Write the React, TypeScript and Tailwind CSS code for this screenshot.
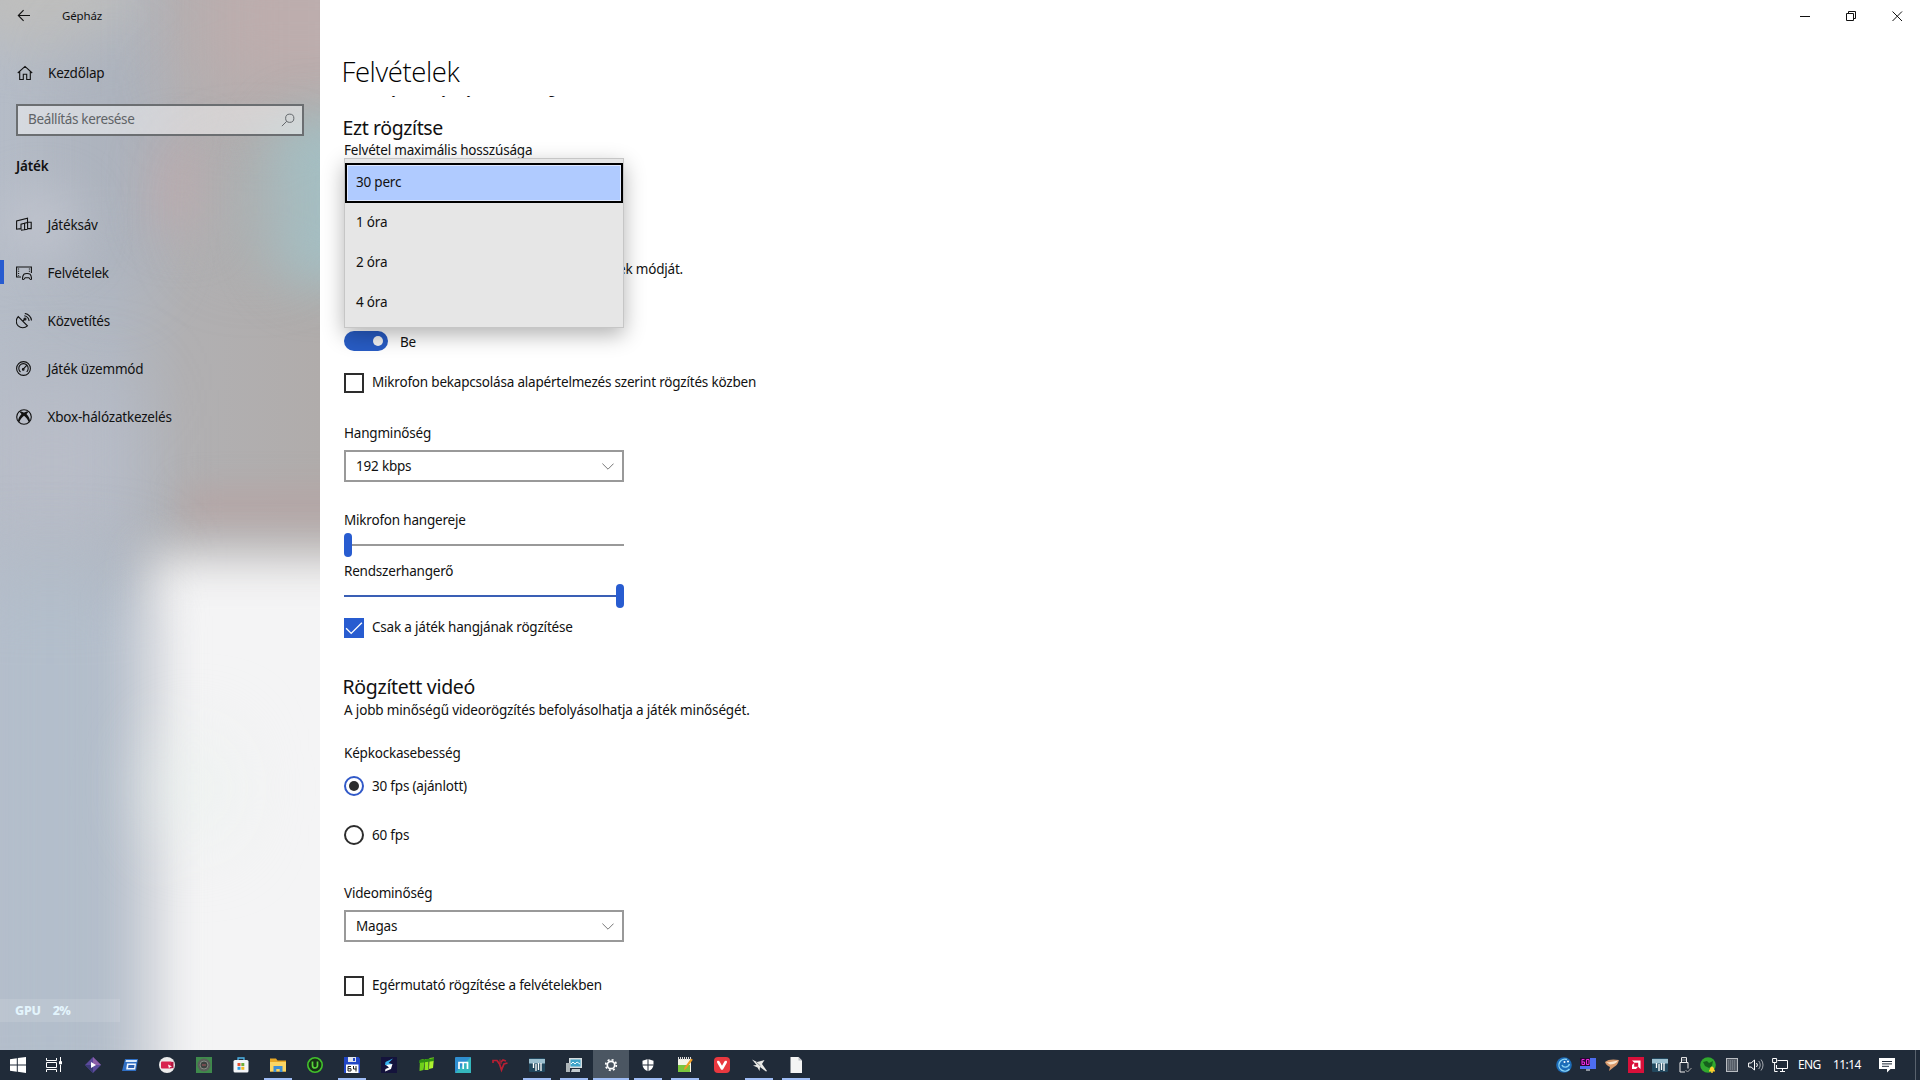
import React, { ReactNode } from 'react';

function Icon({ children, size = 16, className = '' }: { children: ReactNode; size?: number; className?: string }) {
  return (
    <svg width={size} height={size} viewBox="0 0 16 16" fill="none" stroke="currentColor" strokeWidth="1.1" className={`shrink-0 ${className}`}>
      {children}
    </svg>
  );
}

/* ---------- Sidebar ---------- */

function Backdrop() {
  return (
    <div className="absolute inset-0 overflow-hidden bg-[linear-gradient(to_right,#b5bcc7_0%,#b1b7c1_35%,#b1b0b2_58%,#b0acab_100%)]">
      <div className="absolute -left-10 -top-16 h-28 w-44 rounded-full bg-[#bebebd] blur-xl" />
      <div className="absolute left-20 top-8 h-64 w-16 rounded-full bg-[#a9afba] opacity-80 blur-2xl" />
      <div className="absolute left-0 top-48 h-16 w-20 rounded-full bg-[#bfc3cd] blur-xl" />
      <div className="absolute left-[195px] -top-16 h-40 w-52 bg-[#bdadad] blur-2xl" />
      <div className="absolute left-[158px] top-[140px] h-24 w-12 rounded-full bg-[#bcabae] blur-xl" />
      <div className="absolute left-[265px] top-28 h-44 w-28 rounded-full bg-[#a4bfc3] blur-xl" />
      <div className="absolute left-[215px] top-[170px] h-20 w-20 rounded-full bg-[#abb2b4] blur-2xl" />
      <div className="absolute -left-5 top-[390px] h-36 w-36 bg-[#b9bdc8] blur-2xl" />
      <div className="absolute left-[185px] top-[490px] h-8 w-48 bg-[#b5a5a5] blur-lg" />
      <div className="absolute -left-10 top-[570px] h-[560px] w-[180px] bg-[#b3becb] blur-2xl" />
      <div className="absolute left-[150px] top-[556px] h-[620px] w-72 bg-[#f4f4f5] blur-xl" />
      <div className="absolute left-[128px] top-[600px] h-[520px] w-8 bg-[#d7dce6] opacity-50 blur-xl" />
      <div className="absolute left-[165px] top-[740px] h-24 w-14 rounded-full bg-[#e9f1ed] blur-2xl" />
    </div>
  );
}

const navItems = [
  {
    label: 'Játéksáv',
    icon: (
      <Icon>
        <path d="M11.500 5V1.100L.6 4v8.200l4-.6M5 12.600V7.200l3.600-1v6.900M5 13.200l6.600-1M8.600 12.600V6.200l3-.8v6.800M11.600 5.200h3.600v6.400h-3.600" />
      </Icon>
    ),
  },
  {
    label: 'Felvételek',
    active: true,
    icon: (
      <Icon>
        <path d="M5 12H.6V2h14.800v6" />
        <path d="M2.600 3.500v7.200M13.400 3.500V7" strokeDasharray="1 1.200" />
        <path d="M8 9.200c1-.9 5-.9 6 0 .9 1 1.500 3 1.500 4.500 0 1-1 1-1.600.3l-1-1.300H9.200l-1 1.300c-.6.7-1.700.7-1.700-.3 0-1.500.6-3.500 1.500-4.500z" />
      </Icon>
    ),
  },
  {
    label: 'Közvetítés',
    icon: (
      <Icon>
        <path d="M2.200 3.600a6.200 6.200 0 1 0 9.200 9.200zM6.800 8.200l2-2M8.300 2.800a6 6 0 0 1 4.800 5.200M8.800.5a7.500 7.500 0 0 1 6.700 7" />
        <circle cx="9" cy="6" r="1" />
      </Icon>
    ),
  },
  {
    label: 'Játék üzemmód',
    icon: (
      <Icon>
        <circle cx="7.500" cy="7.500" r="6.900" />
        <path d="M4.500 11a4.700 4.700 0 1 1 6.200-.2M7.200 8.200l3.300-3.600" />
        <circle cx="7.200" cy="8.400" r=".8" />
      </Icon>
    ),
  },
  {
    label: 'Xbox-hálózatkezelés',
    icon: (
      <Icon>
        <circle cx="8" cy="8" r="7.300" />
        <path d="M3.200 2.600C5 2 7 3 8 3.700 9 3 11 2 12.800 2.600L10.500 5c2 2.300 3.500 5 3.500 7l-1.400 1C12 10.500 9.800 8 8 6.700 6.200 8 4 10.500 3.400 13L2 12c0-2 1.500-4.700 3.500-7z" fill="currentColor" stroke="none" />
      </Icon>
    ),
  },
];

function Sidebar() {
  return (
    <aside className="relative h-full w-[320px] shrink-0 overflow-hidden">
      <Backdrop />
      <div className="relative flex h-full flex-col">
        <div className="flex h-8 items-center pl-4">
          <Icon>
            <path d="M14 7.500H2.500M7.600 2.200L2.300 7.500l5.300 5.300" />
          </Icon>
          <span className="ml-[30px] text-[11.500px] leading-4 tracking-[-0.150px]">Gépház</span>
        </div>
        <div className="mt-[31px] flex h-5 items-center pl-[17px]">
          <Icon>
            <path d="M.8 8L8 1.400 15.200 8M2.700 6.500v8h3.600V9.300h3.400v5.200h3.600v-8" />
          </Icon>
          <span className="ml-[15px]">Kezdőlap</span>
        </div>
        <div className="ml-4 mt-[21px] flex h-8 w-72 items-center justify-between border-2 border-[#6b6e71] bg-white/45 pl-[10px] pr-[7px]">
          <span className="-mt-[3px] tracking-[-0.35px] text-[#5f6367]">Beállítás keresése</span>
          <Icon size={14} className="text-[#5f6367]">
            <circle cx="10" cy="6" r="4.700" />
            <path d="M6.600 9.400L1 15" />
          </Icon>
        </div>
        <div className="mt-5 h-5 pl-4 font-semibold">Játék</div>
        <nav className="mt-[25px] flex flex-col">
          {navItems.map((n) => (
            <div key={n.label} className="relative flex h-12 items-center pl-4">
              {n.active && <div className="absolute left-0 top-[11px] h-6 w-1 bg-[#285cd0]" />}
              {n.icon}
              <span className="ml-[15.500px]">{n.label}</span>
            </div>
          ))}
        </nav>
        <div className="mb-[28px] mt-auto flex h-[23px] w-[120px] items-center gap-[12px] bg-white/10 pl-[15px] text-[12.500px] font-extrabold text-[#e3f4fc]">
          <span>GPU</span>
          <span className="tracking-[-0.8px]">2%</span>
        </div>
      </div>
    </aside>
  );
}

/* ---------- Form controls ---------- */

function CheckBox({ checked, label }: { checked?: boolean; label: string }) {
  return (
    <div className="flex h-5 items-center">
      {checked ? (
        <div className="flex h-5 w-5 items-center justify-center bg-[#285cd0] text-white">
          <Icon size={18}>
            <path d="M1 8.300l4.500 4.500L15 3.300" strokeWidth="1.200" />
          </Icon>
        </div>
      ) : (
        <div className="h-5 w-5 border-2 border-[#2d2d2d] bg-white" />
      )}
      <span className="-mt-0.5 ml-2">{label}</span>
    </div>
  );
}

function Radio({ checked, label }: { checked?: boolean; label: string }) {
  return (
    <div className="flex h-5 items-center">
      {checked ? (
        <div className="flex h-5 w-5 items-center justify-center rounded-full border-2 border-[#3159c8]">
          <div className="h-[10px] w-[10px] rounded-full bg-[#2d2d2d]" />
        </div>
      ) : (
        <div className="h-5 w-5 rounded-full border-2 border-[#2d2d2d]" />
      )}
      <span className="ml-2">{label}</span>
    </div>
  );
}

function Select({ value }: { value: string }) {
  return (
    <div className="mt-[7px] flex h-8 w-[280px] items-center justify-between border-2 border-[#999] pl-[10px] pr-2">
      <span>{value}</span>
      <svg width="12" height="7" viewBox="0 0 12 7" fill="none" stroke="#777">
        <path d="M.4.6L6 6.200 11.600.6" />
      </svg>
    </div>
  );
}

function Slider({ full }: { full?: boolean }) {
  return (
    <div className={`mt-[3px] flex h-6 w-[280px] items-center ${full ? 'flex-row-reverse' : ''}`}>
      <div className="h-6 w-2 rounded-full bg-[#285cd0]" />
      <div className={`h-0.5 flex-1 ${full ? 'bg-[#3a5fb5]' : 'bg-[#999]'}`} />
    </div>
  );
}

function LengthMenu() {
  return (
    <div className="relative h-0">
      <div className="absolute -top-[2px] left-0 z-10 flex h-[170px] w-[280px] flex-col border border-[#c6c6c6] bg-[#e6e6e6] pt-1 shadow-[0_7px_20px_rgba(0,0,0,0.3)]">
        <div className="flex h-10 items-center border-2 border-black">
          <div className="flex h-full w-full items-center border border-[#dfe8ff] bg-[#b0cbff] pb-[2px] pl-[8px]">30 perc</div>
        </div>
        {['1 óra', '2 óra', '4 óra'].map((o) => (
          <div key={o} className="flex h-10 items-center pb-[2px] pl-[11px]">
            {o}
          </div>
        ))}
      </div>
    </div>
  );
}

function Content() {
  return (
    <main className="flex flex-1 flex-col bg-white pl-6">
      <div className="flex h-[52px] items-start justify-end pt-[7px]">
        <div className="flex h-4 items-center gap-[30px] pr-[15px]">
          <svg width="16" height="16" fill="none" stroke="#111"><path d="M3 9.500h10" /></svg>
          <svg width="16" height="16" fill="none" stroke="#111"><path d="M3.500 6.500h7v7h-7zM5.500 6.500v-2h7v7h-2" /></svg>
          <svg width="16" height="16" fill="none" stroke="#111"><path d="M3.500 4.500l9.500 9.500M13 4.500L3.500 14" /></svg>
        </div>
      </div>
      <h1 className="-ml-[2.500px] h-10 font-['Open_Sans'] text-[27.500px] font-light leading-10 tracking-[-0.4px] text-black">Felvételek</h1>
      <div className="mt-1 flex h-[3px] w-[300px] items-end overflow-hidden pl-[49px]">
        <span className="mb-px w-[50px]">j</span>
        <span className="mb-px w-[25px]">j</span>
        <span className="mb-px w-[80px]">j</span>
        <span className="mb-px">g</span>
      </div>
      <h2 className="-ml-[1.500px] mt-[15px] h-7 text-[19.500px] leading-7 tracking-[-0.4px]">Ezt rögzítse</h2>
      <div className="-mt-0.5">Felvétel maximális hosszúsága</div>
      <LengthMenu />
      <div className="mt-[99px] w-[339px] text-right">felvételek módját.</div>
      <div className="mt-[52px] flex h-5 items-center">
        <div className="flex h-5 w-11 items-center justify-end rounded-full bg-[#285cc4] pr-[5px]">
          <div className="h-[10px] w-[10px] rounded-full bg-[#f2f2f2]" />
        </div>
        <span className="ml-3 mt-0.5">Be</span>
      </div>
      <div className="mt-[22px]"><CheckBox label="Mikrofon bekapcsolása alapértelmezés szerint rögzítés közben" /></div>
      <div className="mt-[30px]">Hangminőség</div>
      <Select value="192 kbps" />
      <div className="mt-[28px]">Mikrofon hangereje</div>
      <Slider />
      <div className="mt-1">Rendszerhangerő</div>
      <Slider full />
      <div className="mt-[10px]"><CheckBox checked label="Csak a játék hangjának rögzítése" /></div>
      <h2 className="-ml-[1.500px] mt-[35px] h-7 text-[19.500px] leading-7 tracking-[-0.3px]">Rögzített videó</h2>
      <div className="-mt-px tracking-[-0.16px]">A jobb minőségű videorögzítés befolyásolhatja a játék minőségét.</div>
      <div className="mt-[23px]">Képkockasebesség</div>
      <div className="mt-[13px]"><Radio checked label="30 fps (ajánlott)" /></div>
      <div className="mt-[29px]"><Radio label="60 fps" /></div>
      <div className="mt-[38px]">Videominőség</div>
      <Select value="Magas" />
      <div className="mt-[34px]"><CheckBox label="Egérmutató rögzítése a felvételekben" /></div>
    </main>
  );
}

/* ---------- Taskbar ---------- */

const apps: { id: string; open?: boolean; active?: boolean; icon: ReactNode }[] = [
  { id: 'media', icon: <><path d="M8 0l8 8-8 8-8-8z" fill="#5b4a9c" /><path d="M8 0l8 8H8z" fill="#8d5fa8" /><path d="M0 8h8v8z" fill="#3c3a78" /><path d="M6 5l5 3-5 3z" fill="#fff" /></> },
  { id: 'run', icon: <><path d="M3 2h13l-2 12H0z" fill="#2f6fc4" /><path d="M4 3h11l-.4 2H3.500z" fill="#d9e9fa" /><path d="M5 6.500h9l-.8 6H4.200z" fill="#f1f6fc" /><path d="M6.500 8h6l-.4 3H6z" fill="#2a5fb0" /></> },
  { id: 'rec', icon: <><circle cx="8" cy="8" r="8" fill="#ececec" /><rect x="2" y="4.500" width="11" height="7" rx="1" fill="#d8234f" /><path d="M12 5.500l2.500-1v7l-2.500-1z" fill="#b01740" /><path d="M9 7.500l4 2-2 .6-1 1.500z" fill="#fff" /></> },
  { id: 'cam', icon: <><rect width="16" height="16" fill="#3f8a4c" /><circle cx="8" cy="8" r="6.500" fill="#5b5f5b" /><circle cx="8" cy="8" r="4" fill="#3c4340" stroke="#858a84" /><path d="M6 8h4" stroke="#a8545c" /></> },
  { id: 'store', icon: <><path d="M5 4V1h6v3" stroke="#4db5e8" fill="none" strokeWidth="1.300" /><rect x=".5" y="3" width="15" height="12.500" rx="1.500" fill="#f4f6f8" /><path d="M4.500 6h3v3h-3z" fill="#e8512e" /><path d="M8.300 6h3v3h-3z" fill="#6fae3c" /><path d="M4.500 9.800h3v3h-3z" fill="#2a9be0" /><path d="M8.300 9.800h3v3h-3z" fill="#f5b921" /></> },
  { id: 'explorer', open: true, icon: <><path d="M0 1.500h6l1.500 2H16v11H0z" fill="#e9a825" /><path d="M0 5h16v9.500H0z" fill="#fcd663" /><path d="M3.500 15V9h9v6h-2.800v-3H6.300v3z" fill="#3f8fd4" /></> },
  { id: 'ugreen', icon: <><circle cx="8" cy="8" r="7.200" fill="#173016" stroke="#42c22c" strokeWidth="1.600" /><path d="M5.500 4.500v4a2.500 2.500 0 0 0 5 0v-4" stroke="#58d53b" strokeWidth="1.700" fill="none" /></> },
  { id: 'commander', open: true, icon: <><path d="M0 0h14.500L16 1.500V16H0z" fill="#2146c6" /><path d="M4 0h8v5H4z" fill="#dfe3ec" /><path d="M9 1h2v3H9z" fill="#2146c6" /><path d="M2 7.500h12.500V16H2z" fill="#fff" /><path d="M7 9.500H4v4.500h3v-2.300H4M9.500 9v3h3M12 9v5.500" stroke="#222" fill="none" /></> },
  { id: 's', icon: <><rect width="16" height="16" fill="#14133c" /><path d="M12 1.500L4.500 5 4 8l6 1 1-2-3.500-1z" fill="#37b5f0" /><path d="M11.500 7L10 12l-6 2.500.5-2.500L8 10.500 5 8z" fill="#fff" /></> },
  { id: 'green', icon: <><path d="M2 3l3.500-1 1 4-1 7-4 1z" fill="#6fd01c" /><path d="M7 2h3.500v11h-4z" fill="#8ee81f" /><path d="M11.500 1L16 .5 15 11l-4 1z" fill="#aef32f" /><path d="M1.500 3L16 1v3L1 6z" fill="#2f8f12" /></> },
  { id: 'm', icon: <><rect width="16" height="16" rx="1" fill="#2f8ed0" /><path d="M0 16L16 0v16z" fill="#35b7bd" /><path d="M4 12V5.500h8.500V12M8.200 6v6" stroke="#fff" strokeWidth="1.700" fill="none" /></> },
  { id: 'v', icon: <><path d="M1 6V3.500h4L7.500 7l2 6 2.500-6 3.500-1M9 5l2-2 3 1" stroke="#b81f33" strokeWidth="1.700" fill="none" /><path d="M6 6h4M8 2.500v3" stroke="#b81f33" /></> },
  { id: 'mixer', open: true, icon: <><rect y="1" width="16" height="14" rx="1" fill="#22485e" /><path d="M0 2h16v4.500H0z" fill="#9cc0d0" /><path d="M4.500 6v5M7 7v7M9.500 6v7M12 6v8" stroke="#fff" strokeWidth="1.300" /></> },
  { id: 'monitor', open: true, icon: <><path d="M3 1h13v10H3z" fill="#d6dde0" /><path d="M4.500 2.500h10v7h-10z" fill="#3fa4ca" /><path d="M5 7l2-2 2 2 2-2 3 2" stroke="#e9fbff" fill="none" /><path d="M0 6h4v9H0z" fill="#aeb6b9" /><path d="M6 12h8v3H5z" fill="#c3cbce" /></> },
  { id: 'settings', open: true, active: true, icon: <><circle cx="8" cy="8" r="3.700" stroke="#fff" strokeWidth="1.700" fill="none" /><circle cx="8" cy="8" r="5.300" stroke="#fff" strokeWidth="1.700" strokeDasharray="2 2.163" fill="none" /></> },
  { id: 'shield', open: true, icon: <><path d="M8 2l5.500 1.800v3.600c0 3.300-2.300 5.600-5.500 6.900-3.200-1.300-5.500-3.600-5.500-6.900V3.800z" fill="#fff" /><path d="M8 2v13M2.200 8h11.600" stroke="#222d3b" /></> },
  { id: 'notes', open: true, icon: <><path d="M1 2h13v13H1z" fill="#f5f5e9" /><path d="M1 8h12v7H1z" fill="#7ac63d" /><path d="M1 1.500h13" stroke="#ddd" strokeDasharray="1 1" strokeWidth="3" /><path d="M14 1.500l1.800 1.300L9 12l-2 1 .3-2.300z" fill="#ed9b24" /></> },
  { id: 'vivaldi', icon: <><rect width="16" height="16" rx="4" fill="#e9383f" /><path d="M4.300 5L8 11.500 11.700 5" stroke="#fff" strokeWidth="2.600" strokeLinecap="round" strokeLinejoin="round" fill="none" /></> },
  { id: 'plane', open: true, icon: <><path d="M1 2.500l5 2.500 7.500-2L11 7l5 7-1 .5-6-4.500L8.500 14l-2-3.500L2 8.500 5.500 8z" fill="#e9e9e6" /><path d="M5 5l4.500 4" stroke="#8b8f92" /></> },
  { id: 'doc', open: true, icon: <><path d="M2.500 0h8l3.500 3.500V16H2.500z" fill="#f4f4f4" /><path d="M10.500 0v3.500H14z" fill="#b9bdc2" /></> },
];

const tray: { id: string; icon: ReactNode }[] = [
  { id: 'c', icon: <><circle cx="8" cy="8" r="7.800" fill="#1c6cb8" /><path d="M11 2.500a6 6 0 1 0 2.500 9.500M6 8c1 3 6 3 7.500-1" stroke="#8bd4f5" strokeWidth="1.400" fill="none" /><circle cx="8.500" cy="5" r="1" fill="#fff" /><circle cx="12" cy="4.500" r="1" fill="#fff" /></> },
  { id: '60', icon: <><rect y="1" width="16" height="11" fill="#4d6df0" /><rect y="1" width="10" height="8" fill="#2a0636" /><path d="M4.500 2.500H2v5h2.500V5H2M6.500 2.500H9v5H6.500z" stroke="#ee2be0" fill="none" /><path d="M6 12h4v2H6z" fill="#8d949d" /></> },
  { id: 'wing', icon: <><path d="M1 5c3-3 9-3 14-2-1 4-3 6-5 7l-5 4 1-4C4 9 2 8 1 5z" fill="#d99a6c" /><path d="M2 5c4 1 8-1 12-1.500-2 3-5 4-8 4z" fill="#fae6cf" /></> },
  { id: 'amd', icon: <><rect width="16" height="16" fill="#d9103a" /><path d="M4 3.500h8.500V12l-2.300-2.300V5.800H6.300z" fill="#fff" /><path d="M4 8l2.200-2v3.800H10L8 12H4z" fill="#fff" /></> },
  { id: 'mix', icon: <><rect y="1" width="16" height="14" rx="1" fill="#22485e" /><path d="M0 2h16v4.500H0z" fill="#9cc0d0" /><path d="M4.500 6v5M7 7v7M9.500 6v7M12 6v8" stroke="#fff" strokeWidth="1.300" /></> },
  { id: 'usb', icon: <><path d="M5.500 5V.6h5V5M4 5.500h8v6M4 5.500V15h5M7 2.500v1M9 2.500v1" stroke="#eee" fill="none" /><path d="M9.500 13l2 2 4-4" stroke="#aaa" fill="none" /></> },
  { id: 'globe', icon: <><circle cx="8" cy="8" r="7.800" fill="#31a82e" /><path d="M3 5l4-1 2 2 4-2-1 5-3 2-4-2z" fill="#14611c" /><path d="M9 13.500c1 0 .8-4 3-4s2 4 3 4v1H9z" fill="#ffd12e" /><circle cx="12" cy="15" r="1" fill="#ffd12e" /></> },
  { id: 'grid', icon: <><rect x="2.500" y="1.500" width="11" height="13" fill="#555c66" stroke="#b9bdc2" /><path d="M4 4h8M4 6h8M4 8h8M4 10h8M4 12h8" stroke="#8d949c" strokeDasharray="1 1" /></> },
  { id: 'volume', icon: <><path d="M.6 6v4h2.500L6.500 13V3L3.100 6z" stroke="#fff" fill="none" /><path d="M8.500 6a3 3 0 0 1 0 4" stroke="#fff" fill="none" /><path d="M10.700 4a6 6 0 0 1 0 8M13 2.500a8.500 8.500 0 0 1 0 11" stroke="#a4a9af" fill="none" /></> },
  { id: 'network', icon: <><path d="M5.500 3.500h10v8h-11V8M8 14.500h5M10.500 11.500v3" stroke="#fff" fill="none" /><path d="M.6 1.500h4v4h-4zM2.600 5.500v9h3" stroke="#fff" fill="none" /></> },
];

function Taskbar() {
  return (
    <footer className="flex h-[30px] items-center bg-[#202b39] text-white">
      <div className="flex h-full w-9 items-center justify-center">
        <svg width="16" height="16" fill="#fff"><path d="M0 2.200L6.800 1.200v6.300H0zM7.800 1.100L16 0v7.500H7.800zM0 8.500h6.800v6.300L0 13.800zM7.800 8.500H16V16l-8.200-1.200z" /></svg>
      </div>
      <div className="flex h-full w-9 items-center justify-center">
        <svg width="16" height="16" fill="none" stroke="#fff"><path d="M.5 1v2.500h10V1M.5 5.500h10v5H.5zM.5 15v-2.500h10V15M14.500 0v4M14.500 8v7" /><path d="M13.500 4.500h2v2.500h-2z" fill="#fff" /></svg>
      </div>
      <div className="ml-[3px] flex h-full gap-px">
        {apps.map((a) => (
          <div key={a.id} className={`relative flex h-full w-9 items-center justify-center ${a.active ? 'bg-[#4b5662]' : ''}`}>
            <svg width="16" height="16" viewBox="0 0 16 16">{a.icon}</svg>
            {a.open && <div className={`absolute bottom-0 h-0.5 bg-[#9fbdf5] ${a.active ? 'w-9' : 'w-7'}`} />}
          </div>
        ))}
      </div>
      <div className="ml-auto flex items-center gap-2">
        {tray.map((t) => (
          <svg key={t.id} width="16" height="16" viewBox="0 0 16 16">{t.icon}</svg>
        ))}
      </div>
      <span className="ml-[10px] w-[23px] text-[12px] tracking-[-0.6px]">ENG</span>
      <span className="ml-[12px] w-[28px] text-[12px] tracking-[-0.6px]">11:14</span>
      <svg width="16" height="16" className="ml-[18px] mr-[20px]"><path d="M0 1h16v11h-4.500L8 15.500V12H0z" fill="#fff" /><path d="M3 4.500h10M3 6.900h10M3 9.300h7" stroke="#202b39" /></svg>
      <div className="mr-1 h-full w-px bg-[#59626d]" />
    </footer>
  );
}

export default function App() {
  return (
    <div className="flex h-[1080px] w-[1920px] flex-col overflow-hidden font-['Noto_Sans','Open_Sans',sans-serif] text-[13.5px] leading-5 tracking-[-0.2px] text-[#111]">
      <div className="flex h-[1050px]">
        <Sidebar />
        <Content />
      </div>
      <Taskbar />
    </div>
  );
}
